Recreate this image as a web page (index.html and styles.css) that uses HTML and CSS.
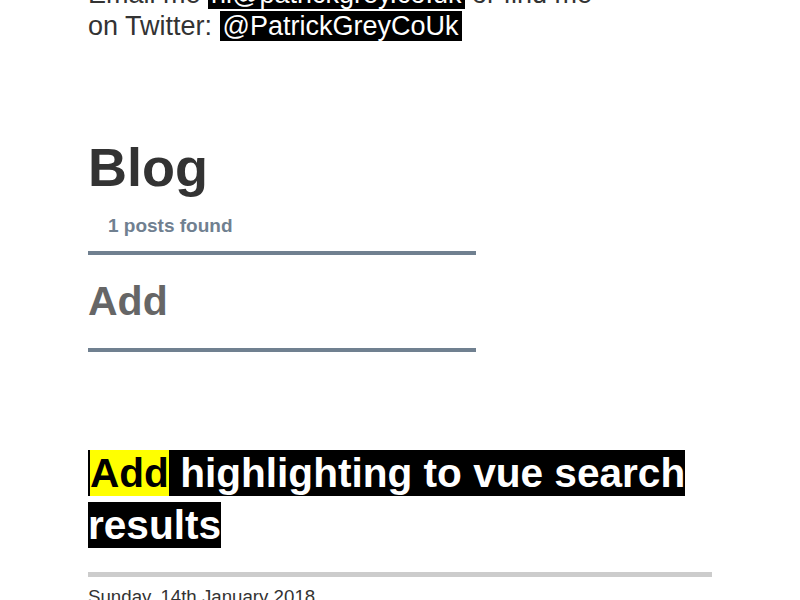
FILE: index.html
```html
<!DOCTYPE html>
<html lang="en">
<head>
<meta charset="utf-8">
<title>Blog</title>
<link rel="stylesheet" href="styles.css">
</head>
<body>
<div class="page">
  <p class="intro">Email me <a class="tag" href="#">hi@patrickgrey.co.uk</a> or find me on Twitter: <a class="tag" href="#">@PatrickGreyCoUk</a></p>
  <section class="blog">
    <h1 class="blog-title">Blog</h1>
    <p class="count">1 posts found</p>
    <input class="search" type="text" value="Add" aria-label="Search posts">
    <article class="post">
      <h2 class="post-title"><span class="post-title-text"><mark class="hit">Add</mark> highlighting to vue search results</span></h2>
      <hr class="post-rule">
      <p class="post-date">Sunday, 14th January 2018</p>
    </article>
  </section>
</div>
</body>
</html>
```
FILE: styles.css
```css
html, body {
  margin: 0;
  padding: 0;
  background: #fff;
}
body {
  font-family: "Liberation Sans", Arial, sans-serif;
  color: #333;
  overflow: hidden;
}
.page {
  width: 624px;
  padding-left: 88px;
  margin-top: -22px;
}
.intro {
  margin: 0;
  max-width: 515px;
  font-size: 27px;
  line-height: 32px;
}
.tag {
  background: #000;
  color: #fff;
  text-decoration: none;
  padding: 0 3px;
}
.blog-title {
  margin: 94px 0 0;
  font-size: 54px;
  line-height: 62px;
  font-weight: bold;
  color: #333;
}
.count {
  margin: 17px 0 0;
  padding-left: 20px;
  font-size: 19px;
  font-weight: bold;
  color: #708090;
}
.search {
  display: block;
  box-sizing: border-box;
  width: 388px;
  height: 101px;
  margin: 14px 0 0;
  padding: 0;
  border: 0;
  border-top: 4px solid #708090;
  border-bottom: 4px solid #708090;
  background: transparent;
  font-family: "Liberation Sans", Arial, sans-serif;
  font-size: 41px;
  font-weight: bold;
  color: #666;
  outline: none;
}
.post-title {
  margin: 95px 0 0;
  font-size: 40.6px;
  line-height: 52px;
  font-weight: bold;
}
.post-title-text {
  background: #000;
  color: #fff;
  padding-left: 2px;
}
.hit {
  background: #ff0;
  color: #000;
}
.post-rule {
  margin: 21px 0 0;
  height: 5px;
  border: 0;
  background: #ccc;
}
.post-date {
  margin: 9px 0 0;
  font-size: 18.7px;
  color: #333;
}
```
